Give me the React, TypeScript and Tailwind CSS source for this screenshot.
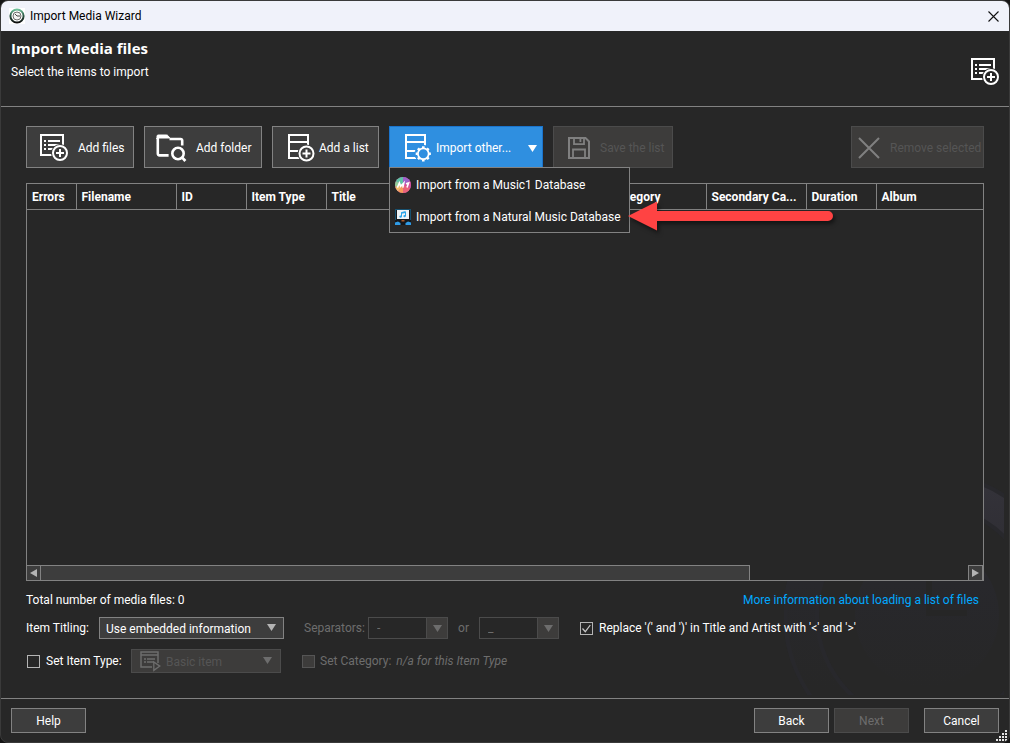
import type { ReactNode } from 'react';
import clsx from 'clsx';

const columns = [
  { label: 'Errors', width: 'w-[49px]' },
  { label: 'Filename', width: 'w-[100px]' },
  { label: 'ID', width: 'w-[70px]' },
  { label: 'Item Type', width: 'w-[80px]' },
  { label: 'Title', width: 'w-[140px]' },
  { label: '', width: 'w-[140px]' },
  { label: 'Category', width: 'w-[100px]' },
  { label: 'Secondary Ca...', width: 'w-[100px]' },
  { label: 'Duration', width: 'w-[70px]' },
  { label: 'Album', width: '' },
];

function PlusBadge({ cx, cy, bg }: { cx: number; cy: number; bg: string }) {
  return (
    <g>
      <circle cx={cx} cy={cy} r="9" fill={bg} />
      <circle cx={cx} cy={cy} r="7" fill={bg} stroke="currentColor" strokeWidth="2" />
      <path d={`M${cx - 4} ${cy}h8M${cx} ${cy - 4}v8`} stroke="currentColor" strokeWidth="2" />
    </g>
  );
}

function AddFilesIcon({ bg }: { bg: string }) {
  return (
    <svg width="29" height="28" viewBox="0 0 29 28" fill="none" aria-hidden="true">
      <rect x="1" y="1" width="22" height="20" stroke="currentColor" strokeWidth="2" />
      <path
        d="M4 7h2M8 7h12M4 11h2M8 11h12M4 15h2M8 15h10"
        stroke="currentColor"
        strokeWidth="2"
      />
      <PlusBadge cx={20} cy={19} bg={bg} />
    </svg>
  );
}

function FolderSearchIcon() {
  return (
    <svg width="31" height="28" viewBox="0 0 31 28" fill="none" stroke="currentColor" aria-hidden="true">
      <path d="M1 5V2.2Q1 1 2.2 1h8.3q1 0 1.6.8L13.7 4H1z" fill="currentColor" strokeWidth="1" />
      <path
        d="M26.2 11.5V6.6q0-1.6-1.6-1.6H13.5M1.8 4v15.6q0 1.8 1.8 1.8h9"
        strokeWidth="2.6"
      />
      <circle cx="22" cy="19.5" r="5.7" strokeWidth="2.6" />
      <path d="M26 23.4l3.4 3.6" strokeWidth="2.8" />
    </svg>
  );
}

function AddListIcon({ bg }: { bg: string }) {
  return (
    <svg width="27" height="28" viewBox="0 0 27 28" fill="none" aria-hidden="true">
      <path d="M1 1h19v23H1zM1 8h19M1 17h19" stroke="currentColor" strokeWidth="2" />
      <PlusBadge cx={18.5} cy={19.5} bg={bg} />
    </svg>
  );
}

function ListGearIcon({ bg }: { bg: string }) {
  return (
    <svg width="27" height="28" viewBox="0 0 27 28" fill="none" stroke="currentColor" aria-hidden="true">
      <path d="M1 1h19v23H1zM1 8h19M1 17h19" strokeWidth="2" />
      <circle cx="18.3" cy="19.8" r="8.4" fill={bg} stroke={bg} strokeWidth="1" />
      <circle cx="18.3" cy="19.8" r="5.4" strokeWidth="1.8" />
      {[0, 45, 90, 135, 180, 225, 270, 315].map((a) => (
        <path key={a} d="M18.3 14.2v-2" strokeWidth="2.6" transform={`rotate(${a} 18.3 19.8)`} />
      ))}
    </svg>
  );
}

function SaveIcon() {
  return (
    <svg width="22" height="22" viewBox="0 0 22 22" fill="none" stroke="currentColor" aria-hidden="true">
      <path d="M1 1h16.5L21 4.5V21H1z" strokeWidth="2" />
      <path d="M6 1v6.2h10V1M12.4 2v3M5 21V12.5h12V21" strokeWidth="1.8" />
    </svg>
  );
}

function CrossIcon() {
  return (
    <svg width="22" height="22" viewBox="0 0 22 22" stroke="currentColor" aria-hidden="true">
      <path d="M1 1l20 20M21 1L1 21" strokeWidth="2" />
    </svg>
  );
}

function ItemIcon() {
  return (
    <svg width="22" height="21" viewBox="0 0 22 21" fill="none" stroke="currentColor" aria-hidden="true">
      <path d="M12 16H1V1h17v11M1 4h17" strokeWidth="1.5" />
      <path d="M4 8h2M7 8h8M4 11h2M7 11h7" strokeWidth="1.4" />
      <path d="M13.8 11v8.4l6-4.3z" strokeWidth="1.3" />
    </svg>
  );
}

function AppIcon() {
  return (
    <svg width="16" height="16" viewBox="0 0 16 16" fill="none" aria-hidden="true">
      <defs>
        <linearGradient id="ring" x1="0" y1="0" x2="0" y2="1">
          <stop offset="0" stopColor="#6fc19b" />
          <stop offset="0.45" stopColor="#2c5a49" />
          <stop offset="1" stopColor="#0d0d0d" />
        </linearGradient>
      </defs>
      <rect width="16" height="16" fill="#fff" />
      <circle cx="8" cy="8" r="6.6" stroke="url(#ring)" strokeWidth="2" />
      <circle cx="8" cy="8" r="4" fill="#f2f2f2" stroke="#6c6c6c" strokeWidth="1" />
      <path d="M6 6l2 2h3" stroke="#444" strokeWidth="1" />
    </svg>
  );
}

function Music1Icon() {
  return (
    <svg width="16" height="16" viewBox="0 0 16 16" className="shrink-0" aria-hidden="true">
      <clipPath id="disc">
        <circle cx="8" cy="8" r="8" />
      </clipPath>
      <g clipPath="url(#disc)">
        <rect width="16" height="16" fill="#c65fb2" />
        <path d="M8 8L-2 3V-2H8z" fill="#5fc3a5" />
        <path d="M8 8V-2h9v5z" fill="#9d62c8" />
        <path d="M8 8l9-5v9z" fill="#d2509c" />
        <path d="M8 8l9 4v6H8z" fill="#e9637a" />
        <path d="M8 8v10H0z" fill="#f59a5a" />
        <path d="M8 8L0 18-2 10z" fill="#f1bd6b" />
        <path d="M8 8l-10 2V3z" fill="#8fcf96" />
      </g>
      <path
        d="M2.4 10.6l2-4.6 1.2 3.2L8.8 6l-1 4.600M11 6.800L13.600 6l-1.600 4.600"
        fill="none"
        stroke="#fff"
        strokeWidth="1.6"
      />
    </svg>
  );
}

function NaturalMusicIcon() {
  return (
    <svg width="16" height="16" viewBox="0 0 16 16" className="shrink-0" aria-hidden="true">
      <rect width="16" height="12" fill="#17506f" />
      <rect x="1" y="1" width="14" height="10" fill="#17191c" />
      <rect x="2" y="1" width="12" height="9" fill="#eef2f5" />
      <path d="M6.500 7.500V3.500l4-.7V7" fill="none" stroke="#2aa3e8" strokeWidth="1" />
      <path d="M6.500 4l4-.7" stroke="#2aa3e8" strokeWidth="1.4" />
      <circle cx="5.600" cy="7.600" r="1.200" fill="#2aa3e8" />
      <circle cx="9.600" cy="7.100" r="1.200" fill="#2aa3e8" />
      <path d="M0 11h16v5H0z" fill="#14171b" />
      <path d="M0 16v-2.500L3 12.500l2.500 1.500v2zM16 16v-2.500L13 12.500 10.500 14v2z" fill="#2f9be6" />
      <path d="M6.500 11h3v1.500h-3z" fill="#a85a2c" />
    </svg>
  );
}

function DownArrow({ className }: { className?: string }) {
  return (
    <svg width="9" height="7" viewBox="0 0 9 7" className={className} aria-hidden="true">
      <path d="M0 0h9L4.500 7z" fill="currentColor" />
    </svg>
  );
}

function Watermark() {
  return (
    <svg
      className="pointer-events-none absolute right-[5px] bottom-[3px]"
      width="220"
      height="220"
      viewBox="0 0 220 220"
      fill="none"
      aria-hidden="true"
    >
      <defs>
        <linearGradient id="fade" gradientUnits="userSpaceOnUse" x1="0" y1="0" x2="0" y2="215">
          <stop offset="0" stopColor="#34333a" />
          <stop offset="0.35" stopColor="#2f2e34" />
          <stop offset="0.5" stopColor="#28282c" />
          <stop offset="1" stopColor="#272727" />
        </linearGradient>
      </defs>
      <circle cx="143" cy="140" r="126" stroke="#292931" strokeWidth="36" opacity="0.5" />
      <circle cx="143" cy="140" r="126" stroke="url(#fade)" strokeWidth="28" />
      <circle cx="143" cy="140" r="72" fill="url(#fade)" />
      <path d="M145 96v42h38" stroke="#262626" strokeWidth="6" />
    </svg>
  );
}

type ToolButtonProps = {
  icon: ReactNode;
  label: string;
  width: string;
  disabled?: boolean;
  className?: string;
};

function ToolButton({ icon, label, width, disabled, className }: ToolButtonProps) {
  return (
    <button
      type="button"
      disabled={disabled}
      className={clsx(
        'flex h-[42px] shrink-0 items-center border pt-0.5 whitespace-nowrap',
        disabled
          ? 'border-[#4b4b4b] bg-[#3d3c3b] text-[#808080]'
          : 'border-[#828282] bg-[#3d3d3d] text-white hover:bg-[#4a4a4a]',
        width,
        className
      )}
    >
      {icon}
      <span className={clsx(disabled && 'text-[#555]')}>{label}</span>
    </button>
  );
}

function FooterButton({ label, disabled }: { label: string; disabled?: boolean }) {
  return (
    <button
      type="button"
      disabled={disabled}
      className={clsx(
        'h-[25px] w-[75px] border',
        disabled
          ? 'border-[#4b4b4b] bg-[#3d3c3b] text-[#6d6d6d]'
          : 'border-[#828282] bg-[#3d3d3d] text-white hover:bg-[#4a4a4a]'
      )}
    >
      {label}
    </button>
  );
}

function SeparatorSelect({ label, value }: { label: string; value: string }) {
  return (
    <div className="relative h-[22px] w-[80px]">
      <select
        disabled
        aria-label={label}
        className="h-full w-full appearance-none border border-[#4b4b4b] bg-[#272727] pl-2 text-[#6d6d6d] opacity-100"
      >
        <option>{value}</option>
      </select>
      <span className="pointer-events-none absolute inset-y-0 right-0 flex w-[22px] items-center justify-center border border-[#4b4b4b] bg-[#3d3c3b]">
        <DownArrow className="text-[#6d6d6d]" />
      </span>
    </div>
  );
}

const checkboxClass =
  'relative size-[13px] shrink-0 appearance-none border border-[#b4b4b4] bg-[#272727] disabled:border-[#555] disabled:bg-[#3d3c3b]';

const menuItemClass =
  'flex h-8 w-full items-center gap-[5px] pt-0.5 pl-[5px] whitespace-nowrap hover:bg-[#3d3d3d]';

export default function App() {
  return (
    <div className="min-h-screen bg-[#151515] font-['Roboto','Open_Sans',sans-serif] text-[12px] leading-4 text-white">
      <div className="flex min-h-screen flex-col overflow-hidden rounded-lg border border-[#3a3a3a] bg-[#272727]">
        <div className="flex h-[30px] shrink-0 items-center bg-[#f0f2fa] pr-2 pl-2 text-black">
          <AppIcon />
          <span className="ml-[5px]">Import Media Wizard</span>
          <button type="button" aria-label="Close" className="ml-auto p-0.5">
            <svg width="11" height="11" viewBox="0 0 11 11" stroke="#111" aria-hidden="true">
              <path d="M.5 .5l10 10M10.5 .5l-10 10" strokeWidth="1.1" />
            </svg>
          </button>
        </div>

        <header className="flex h-[76px] shrink-0 justify-between border-b border-[#828282] pr-[9px] pl-2.5">
          <div className="pt-[7px]">
            <h1 className="font-['Open_Sans',sans-serif] text-[15px] leading-5 font-bold">
              Import Media files
            </h1>
            <p className="mt-1.5">Select the items to import</p>
          </div>
          <div className="pt-[27px]">
            <AddFilesIcon bg="#272727" />
          </div>
        </header>

        <main className="relative flex flex-1 flex-col pt-[19px] pr-[25px] pb-[25px] pl-[25px]">
          <Watermark />

          <div className="relative z-10 flex gap-2.5">
            <ToolButton
              icon={<AddFilesIcon bg="#3d3d3d" />}
              label="Add files"
              width="w-[108px]"
              className="gap-[9px] pl-[13px]"
            />
            <ToolButton
              icon={<FolderSearchIcon />}
              label="Add folder"
              width="w-[118px]"
              className="gap-[9px] pl-[11px]"
            />
            <ToolButton
              icon={<AddListIcon bg="#3d3d3d" />}
              label="Add a list"
              width="w-[107px]"
              className="gap-1 pl-[15px]"
            />
            <div className="relative">
              <button
                type="button"
                aria-haspopup="menu"
                aria-expanded="true"
                className="flex h-[42px] w-[154px] items-center gap-1 border border-[#1b74cc] bg-[#2f8fe0] pt-0.5 pr-[5px] pl-[15px] whitespace-nowrap"
              >
                <ListGearIcon bg="#2f8fe0" />
                <span>Import other...</span>
                <DownArrow className="ml-auto" />
              </button>
              <div
                role="menu"
                className="absolute top-[41px] left-0 w-[241px] border border-[#828282] bg-[#272727]"
              >
                <button type="button" role="menuitem" className={menuItemClass}>
                  <Music1Icon />
                  Import from a Music1 Database
                </button>
                <button type="button" role="menuitem" className={menuItemClass}>
                  <NaturalMusicIcon />
                  Import from a Natural Music Database
                </button>
              </div>
              <svg
                className="pointer-events-none absolute top-[71px] left-[238px] drop-shadow-[2px_3px_2px_rgba(0,0,0,0.5)]"
                width="208"
                height="38"
                viewBox="0 0 208 38"
                aria-hidden="true"
              >
                <path d="M1 19L30 4.500V14H201a5 5 0 0 1 0 10H30V33.500z" fill="#ff4343" />
              </svg>
            </div>
            <ToolButton
              icon={<SaveIcon />}
              label="Save the list"
              width="w-[120px]"
              disabled
              className="gap-2.5 pl-3.5"
            />
            <ToolButton
              icon={<CrossIcon />}
              label="Remove selected"
              width="w-[133px]"
              disabled
              className="ml-auto gap-2.5 pl-1.5"
            />
          </div>

          <div className="relative mt-[15px] flex flex-1 flex-col border border-[#828282] bg-[#272727]">
            <table className="w-full table-fixed border-collapse">
              <thead>
                <tr className="h-[25px] border-b border-[#828282]">
                  {columns.map((col, i) => (
                    <th
                      key={i}
                      className={clsx(
                        'overflow-hidden border-r border-[#828282] pt-0.5 pl-[5px] text-left font-bold whitespace-nowrap last:border-r-0',
                        col.width
                      )}
                    >
                      {col.label}
                    </th>
                  ))}
                </tr>
              </thead>
              <tbody />
            </table>
            <div className="mt-auto flex h-[15px] justify-between">
              <button
                type="button"
                aria-label="Scroll left"
                className="flex w-[13px] items-center justify-center border-t border-[#828282] bg-[#3d3d3d]"
              >
                <svg width="7" height="8" viewBox="0 0 7 8" aria-hidden="true">
                  <path d="M7 0v8L0 4z" fill="#b4b4b4" />
                </svg>
              </button>
              <div className="flex flex-1">
                <div className="w-[76.5%] border border-b-0 border-[#828282] bg-[#3d3d3d]" />
              </div>
              <button
                type="button"
                aria-label="Scroll right"
                className="flex w-[15px] items-center justify-center border border-b-0 border-[#828282] bg-[#3d3d3d]"
              >
                <svg width="7" height="8" viewBox="0 0 7 8" aria-hidden="true">
                  <path d="M0 0v8l7-4z" fill="#b4b4b4" />
                </svg>
              </button>
            </div>
          </div>

          <div className="relative mt-[11px] flex justify-between pr-[5px]">
            <span>Total number of media files: 0</span>
            <a href="#loading-list" className="text-[#00a8ff] hover:underline">
              More information about loading a list of files
            </a>
          </div>

          <div className="relative mt-[9px] flex items-center whitespace-nowrap">
            <label htmlFor="titling" className="w-[73px]">
              Item Titling:
            </label>
            <div className="relative h-[22px] w-[185px]">
              <select
                id="titling"
                className="h-full w-full appearance-none border border-[#828282] bg-[#3d3d3d] pt-px pl-1.5"
              >
                <option>Use embedded information</option>
              </select>
              <DownArrow className="pointer-events-none absolute top-[7px] right-2 text-[#b4b4b4]" />
            </div>
            <span className="ml-5 w-16 text-[#6d6d6d]">Separators:</span>
            <SeparatorSelect label="First separator" value="-" />
            <span className="w-[31px] text-center text-[#6d6d6d]">or</span>
            <SeparatorSelect label="Second separator" value="_" />
            <label className="ml-[21px] flex items-center gap-1.5">
              <span className="relative flex">
                <input type="checkbox" defaultChecked className={clsx(checkboxClass, 'peer')} />
                <svg
                  width="13"
                  height="13"
                  viewBox="0 0 13 13"
                  fill="none"
                  className="pointer-events-none absolute inset-0 hidden peer-checked:block"
                  aria-hidden="true"
                >
                  <path d="M2.5 6.5l2.8 3.2 5-6.7" stroke="#c8c8c8" strokeWidth="1.2" />
                </svg>
              </span>
              Replace '(' and ')' in Title and Artist with '&lt;' and '&gt;'
            </label>
          </div>

          <div className="relative mt-2.5 flex items-center whitespace-nowrap">
            <label className="ml-px flex w-[104px] items-center gap-1.5">
              <input type="checkbox" className={checkboxClass} />
              Set Item Type:
            </label>
            <div className="relative h-6 w-[150px] text-[#6d6d6d]">
              <select
                disabled
                aria-label="Item type"
                className="h-full w-full appearance-none border border-[#4b4b4b] bg-[#3d3c3b] pt-px pl-[34px] text-[#555] opacity-100"
              >
                <option>Basic item</option>
              </select>
              <span className="pointer-events-none absolute inset-y-0 left-[9px] flex items-center">
                <ItemIcon />
              </span>
              <DownArrow className="pointer-events-none absolute top-2 right-[9px]" />
            </div>
            <label className="ml-[21px] flex items-center gap-[5px] text-[#6d6d6d]">
              <input type="checkbox" disabled className={checkboxClass} />
              Set Category: <i>n/a for this Item Type</i>
            </label>
          </div>
        </main>

        <footer className="relative flex h-11 shrink-0 items-start gap-[5px] border-t border-[#828282] px-2.5 pt-[9px]">
          <FooterButton label="Help" />
          <div className="ml-auto flex gap-[5px]">
            <FooterButton label="Back" />
            <FooterButton label="Next" disabled />
          </div>
          <div className="ml-2.5">
            <FooterButton label="Cancel" />
          </div>
          <svg
            className="absolute right-0.5 bottom-px"
            width="11"
            height="11"
            viewBox="0 0 11 11"
            fill="#e6e6e6"
            aria-hidden="true"
          >
            <path d="M9 0h2v2H9zM9 3h2v2H9zM6 3h2v2H6zM9 6h2v2H9zM6 6h2v2H6zM3 6h2v2H3zM9 9h2v2H9zM6 9h2v2H6zM3 9h2v2H3zM0 9h2v2H0z" />
          </svg>
        </footer>
      </div>
    </div>
  );
}
